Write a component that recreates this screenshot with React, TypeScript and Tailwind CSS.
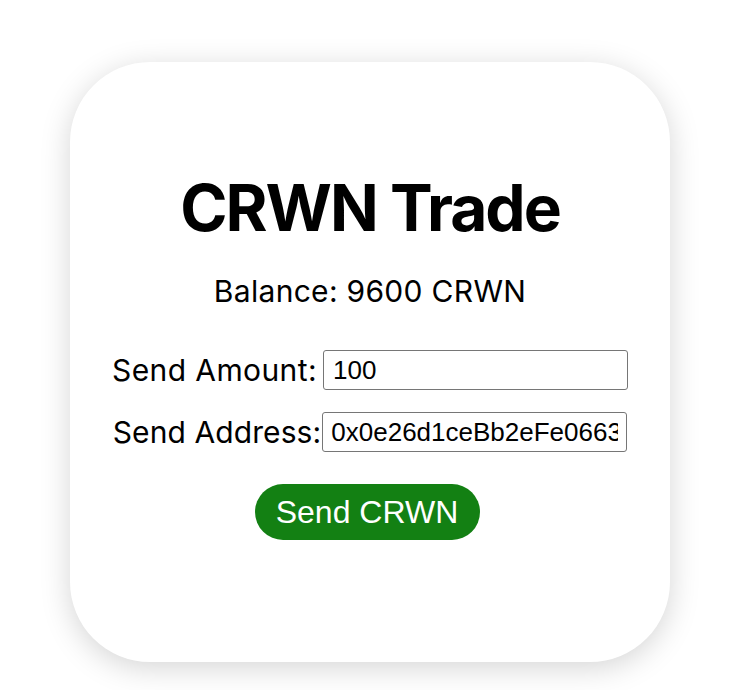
export default function App() {
    return (
        <div className="min-h-[690px] w-[732px] bg-white pt-[62px] pl-[70px]">
            {/* Card */}
            <div className="w-[600px] h-[600px] rounded-[80px] bg-white shadow-[0_6px_30px_rgba(0,0,0,0.17)] flex flex-col items-center pt-[114px] font-['Inter',sans-serif] text-black">
                <h1 className="text-[64px] font-bold leading-none tracking-[-2px]">CRWN Trade</h1>

                <p className="mt-[36px] text-[30px] leading-none tracking-[0.3px]">Balance: 9600 CRWN</p>

                <div className="mt-[44px] flex flex-col items-center gap-[22px]">
                    <div className="flex items-center gap-[6px]">
                        <span className="text-[30px] leading-none tracking-[0.4px]">Send Amount:</span>
                        <input
                            defaultValue="100"
                            className="w-[305px] h-[40px] border border-[#767676] rounded-[3px] px-[9px] font-['Liberation_Sans',Arial,sans-serif] text-[26px] text-black outline-none"
                        />
                    </div>
                    <div className="flex items-center gap-[1px]">
                        <span className="text-[30px] leading-none tracking-[0.1px]">Send Address:</span>
                        <input
                            defaultValue="0x0e26d1ceBb2eFe0663a7C1C8E9bB52b5b2Ef9E14"
                            className="w-[305px] h-[40px] border border-[#767676] rounded-[3px] px-[8px] font-['Liberation_Sans',Arial,sans-serif] text-[26px] text-black outline-none"
                        />
                    </div>
                </div>

                <button className="mt-[32px] mr-[6px] w-[225px] h-[56px] rounded-full bg-[#138013] text-white font-['Liberation_Sans',Arial,sans-serif] text-[32px]">
                    Send CRWN
                </button>
            </div>
        </div>
    );
}
